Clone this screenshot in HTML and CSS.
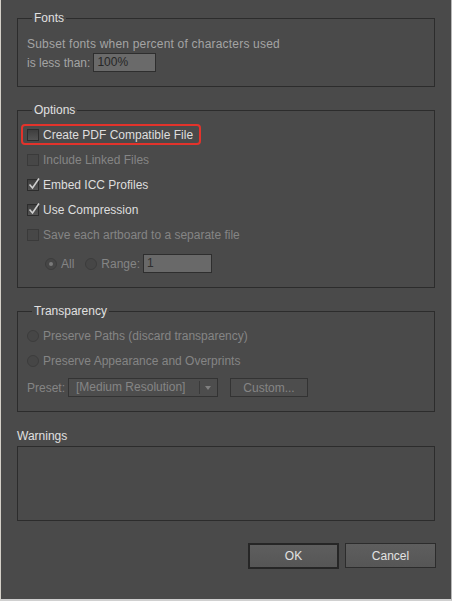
FILE: index.html
```html
<!DOCTYPE html>
<html>
<head>
<meta charset="utf-8">
<link rel="stylesheet" href="styles.css">
</head>
<body>
<div class="dialog">
  <fieldset class="group fonts">
    <legend>Fonts</legend>
    <div class="text dim">Subset fonts when percent of characters used</div>
    <div class="fieldrow dim">is less than: <span class="field pct">100%</span></div>
  </fieldset>

  <fieldset class="group options">
    <legend>Options</legend>
    <div class="row highlighted">
      <span class="check"></span><span class="label">Create PDF Compatible File</span>
      <span class="mark"></span>
    </div>
    <div class="row off">
      <span class="check"></span><span class="label">Include Linked Files</span>
    </div>
    <div class="row">
      <span class="check on"><svg viewBox="0 0 14 14" width="14" height="14"><path d="M2.5 7.5 L5.5 11 L12 1.5" fill="none" stroke="#cfcfcf" stroke-width="1.6"/></svg></span><span class="label">Embed ICC Profiles</span>
    </div>
    <div class="row">
      <span class="check on"><svg viewBox="0 0 14 14" width="14" height="14"><path d="M2.5 7.5 L5.5 11 L12 1.5" fill="none" stroke="#cfcfcf" stroke-width="1.6"/></svg></span><span class="label">Use Compression</span>
    </div>
    <div class="row off">
      <span class="check"></span><span class="label">Save each artboard to a separate file</span>
    </div>
    <div class="radiorow off">
      <span class="radio sel"></span><span class="label gap">All</span>
      <span class="radio"></span><span class="label">Range:</span>
      <span class="field range">1</span>
    </div>
  </fieldset>

  <fieldset class="group transp">
    <legend>Transparency</legend>
    <div class="row off">
      <span class="radio"></span><span class="label">Preserve Paths (discard transparency)</span>
    </div>
    <div class="row off">
      <span class="radio"></span><span class="label">Preserve Appearance and Overprints</span>
    </div>
    <div class="presetrow off">
      <span class="label">Preset:</span>
      <span class="select"><span class="seltext">[Medium Resolution]</span><span class="arrow"></span></span>
      <span class="btn small">Custom...</span>
    </div>
  </fieldset>

  <div class="warnlabel">Warnings</div>
  <div class="warnbox"></div>

  <div class="buttons">
    <span class="btn big default">OK</span>
    <span class="btn big">Cancel</span>
  </div>
</div>
</body>
</html>
```

FILE: styles.css
```css
html, body {
  margin: 0;
  padding: 0;
  background: #4a4a4a;
}
body {
  font-family: "Liberation Sans", Arial, sans-serif;
  font-size: 12px;
  color: #dedede;
}
.dialog {
  box-sizing: border-box;
  width: 452px;
  height: 601px;
  border-left: 1px solid #d4d0c8;
  border-right: 1px solid #b8b8b8;
  border-bottom: 2px solid #d0d0d0;
  padding: 11px 16px 0 16px;
  background: #4a4a4a;
}
.group {
  margin: 0 0 16px 0;
  border: 1px solid #2c2c2c;
  min-width: 0;
  padding: 0 9px 14px 9px;
}
.group legend {
  margin-left: 5px;
  padding: 0 2px;
  line-height: 14px;
  color: #e0e0e0;
}
.fonts { padding-top: 12px; }
.text { line-height: 14px; letter-spacing: 0.2px; }
.dim { color: #a4a4a4; }
.fieldrow {
  display: flex;
  align-items: center;
  height: 19px;
  margin-top: 2px;
}
.field {
  box-sizing: border-box;
  display: inline-block;
  height: 19px;
  line-height: 17px;
  border: 1px solid #2e2e2e;
  background: #6a6a6a;
  color: #262626;
  padding: 0 3px;
}
.pct { width: 63px; margin-left: 3px; }

.options { padding-top: 5px; }
.row {
  position: relative;
  display: flex;
  align-items: center;
  height: 25px;
}
.check {
  box-sizing: border-box;
  position: relative;
  width: 12px;
  height: 12px;
  border: 1px solid #2c2c2c;
  background: linear-gradient(#3e3e3e, #545454);
  margin-right: 4px;
  flex: none;
}
.check svg {
  position: absolute;
  left: -1px;
  top: -3px;
}
.off .check {
  border-color: #3a3a3a;
  background: #474747;
}
.label { line-height: 14px; }
.off { color: #888888; }
.off .label { color: #858585; }
.mark {
  position: absolute;
  left: -6px;
  top: 2px;
  width: 180px;
  height: 21px;
  box-sizing: border-box;
  border: 2px solid #e3332b;
  border-radius: 4px;
}
.radiorow {
  display: flex;
  align-items: center;
  height: 19px;
  margin-top: 7px;
  padding-left: 18px;
}
.radio {
  box-sizing: border-box;
  position: relative;
  width: 12px;
  height: 12px;
  border-radius: 50%;
  border: 1px solid #3c3c3c;
  background: #464646;
  margin-right: 4px;
  flex: none;
}
.radio.sel::after {
  content: "";
  position: absolute;
  left: 3px;
  top: 3px;
  width: 4px;
  height: 4px;
  border-radius: 50%;
  background: #7a7a7a;
}
.radiorow .label { margin-right: 3px; }
.radiorow .label.gap { margin-right: 11px; }
.range { width: 69px; background: #696969; color: #2e2e2e; }

.transp { padding-top: 5px; }
.presetrow {
  display: flex;
  align-items: center;
  height: 19px;
  margin-top: 5px;
}
.select {
  box-sizing: border-box;
  display: flex;
  align-items: center;
  width: 150px;
  height: 19px;
  margin-left: 3px;
  border: 1px solid #333333;
  background: #4d4d4d;
  color: #858585;
}
.seltext {
  flex: 1;
  padding-left: 7px;
  line-height: 17px;
}
.arrow {
  position: relative;
  width: 16px;
  height: 13px;
  border-left: 1px solid #3a3a3a;
  margin-right: 1px;
}
.arrow::after {
  content: "";
  position: absolute;
  left: 5px;
  top: 5px;
  border-left: 3.5px solid transparent;
  border-right: 3.5px solid transparent;
  border-top: 4px solid #808080;
}
.btn {
  box-sizing: border-box;
  display: inline-flex;
  align-items: center;
  justify-content: center;
}
.btn.small {
  width: 78px;
  height: 19px;
  margin-left: 12px;
  border: 1px solid #333333;
  background: #4d4d4d;
  color: #858585;
}
.warnlabel {
  line-height: 14px;
  margin-top: 17px;
  color: #e0e0e0;
}
.warnbox {
  box-sizing: border-box;
  height: 75px;
  margin-top: 3px;
  border: 1px solid #2c2c2c;
}
.buttons {
  display: flex;
  justify-content: flex-end;
  gap: 6px;
  margin-top: 22px;
  margin-right: -1px;
}
.btn.big {
  width: 91px;
  height: 25px;
  border: 1px solid #2c2c2c;
  background: linear-gradient(#5e5e5e, #565656);
  color: #e2e2e2;
}
.btn.default {
  border: 2px solid #262626;
  height: 26px;
}
```
